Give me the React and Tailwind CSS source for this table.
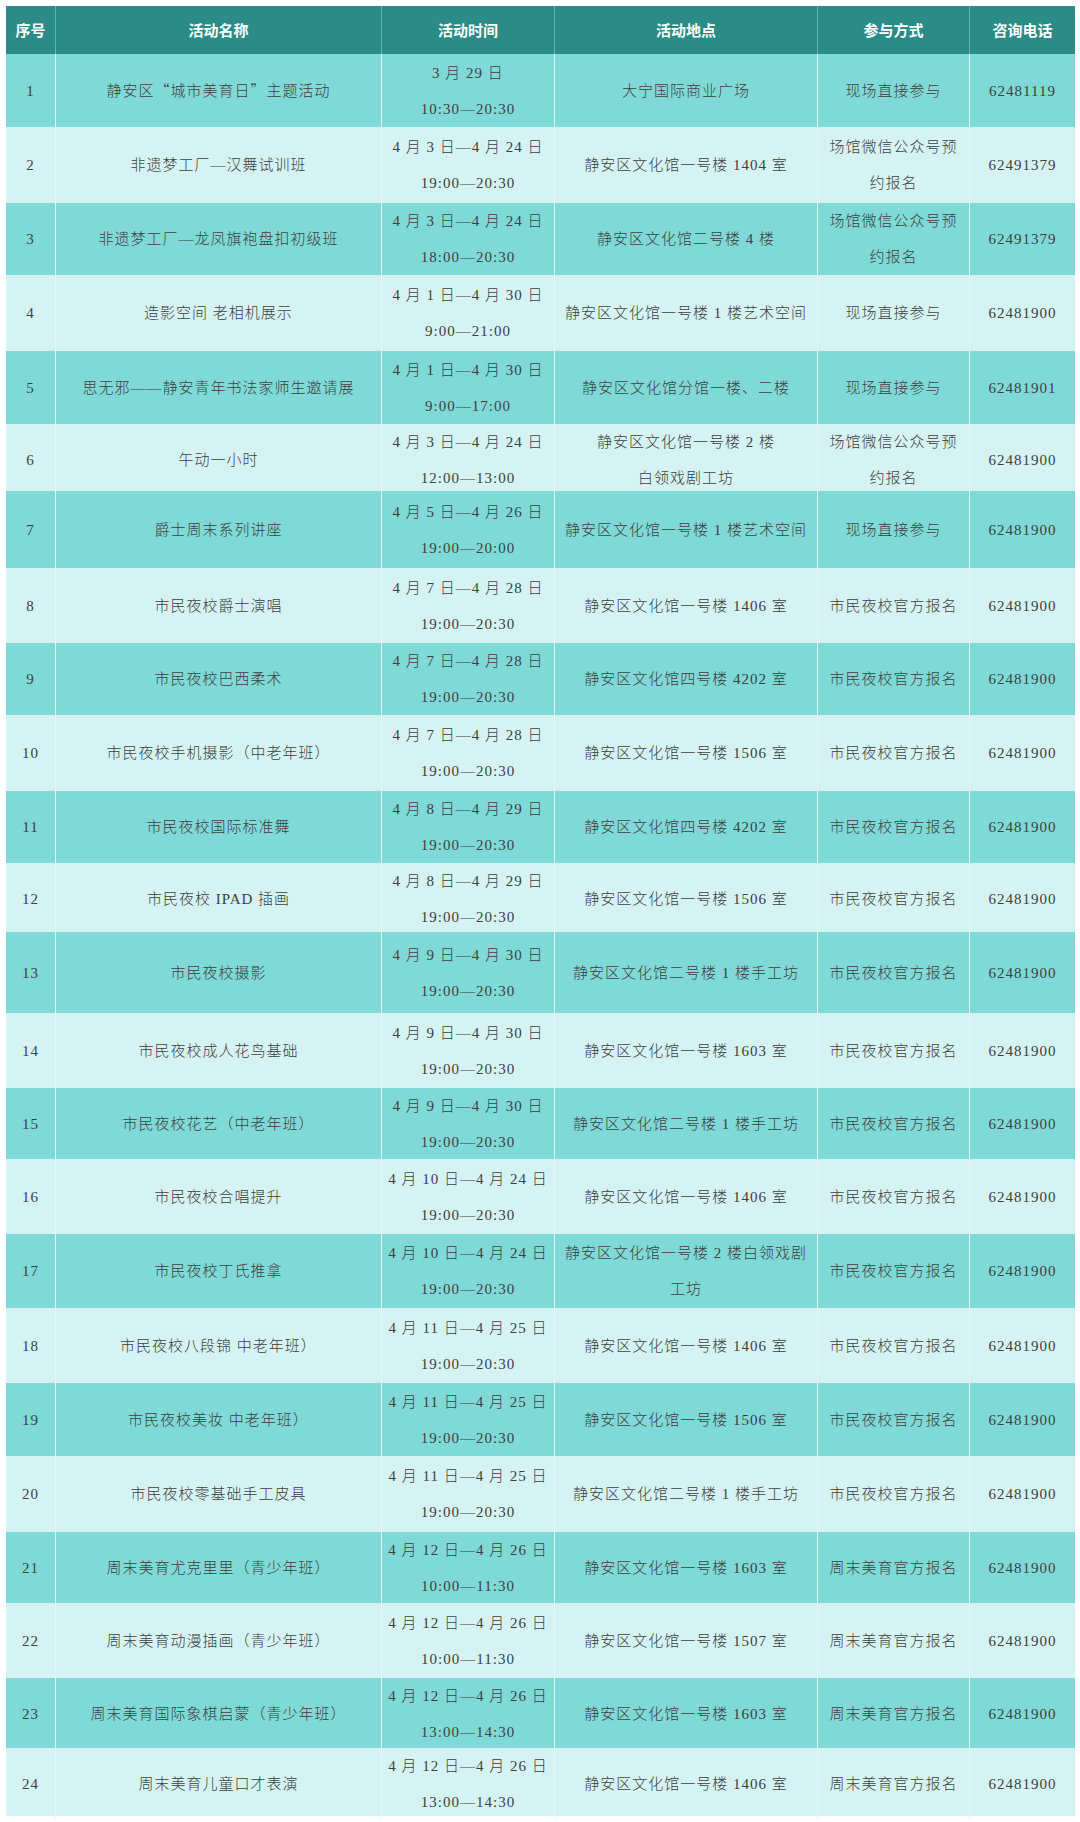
const cjk = "font-['Noto_Sans_CJK_SC',sans-serif]";

const rows = [
  { h: "h-[73px]", no: "1", name: [<>静安区<span className={cjk}>“</span>城市美育日<span className={cjk}>”</span>主题活动</>], time: ["3 月 29 日", "10:30—20:30"], place: ["大宁国际商业广场"], way: ["现场直接参与"], tel: "62481119" },
  { h: "h-[76px]", no: "2", name: ["非遗梦工厂—汉舞试训班"], time: ["4 月 3 日—4 月 24 日", "19:00—20:30"], place: ["静安区文化馆一号楼 1404 室"], way: ["场馆微信公众号预", "约报名"], tel: "62491379" },
  { h: "h-[72px]", no: "3", name: ["非遗梦工厂—龙凤旗袍盘扣初级班"], time: ["4 月 3 日—4 月 24 日", "18:00—20:30"], place: ["静安区文化馆二号楼 4 楼"], way: ["场馆微信公众号预", "约报名"], tel: "62491379" },
  { h: "h-[76px]", no: "4", name: ["造影空间 老相机展示"], time: ["4 月 1 日—4 月 30 日", "9:00—21:00"], place: ["静安区文化馆一号楼 1 楼艺术空间"], way: ["现场直接参与"], tel: "62481900" },
  { h: "h-[73px]", no: "5", name: ["思无邪——静安青年书法家师生邀请展"], time: ["4 月 1 日—4 月 30 日", "9:00—17:00"], place: ["静安区文化馆分馆一楼、二楼"], way: ["现场直接参与"], tel: "62481901" },
  { h: "h-[67px]", no: "6", name: ["午动一小时"], time: ["4 月 3 日—4 月 24 日", "12:00—13:00"], place: ["静安区文化馆一号楼 2 楼", "白领戏剧工坊"], way: ["场馆微信公众号预", "约报名"], tel: "62481900" },
  { h: "h-[77px]", no: "7", name: ["爵士周末系列讲座"], time: ["4 月 5 日—4 月 26 日", "19:00—20:00"], place: ["静安区文化馆一号楼 1 楼艺术空间"], way: ["现场直接参与"], tel: "62481900" },
  { h: "h-[75px]", no: "8", name: ["市民夜校爵士演唱"], time: ["4 月 7 日—4 月 28 日", "19:00—20:30"], place: ["静安区文化馆一号楼 1406 室"], way: ["市民夜校官方报名"], tel: "62481900" },
  { h: "h-[72px]", no: "9", name: ["市民夜校巴西柔术"], time: ["4 月 7 日—4 月 28 日", "19:00—20:30"], place: ["静安区文化馆四号楼 4202 室"], way: ["市民夜校官方报名"], tel: "62481900" },
  { h: "h-[76px]", no: "10", name: ["市民夜校手机摄影（中老年班）"], time: ["4 月 7 日—4 月 28 日", "19:00—20:30"], place: ["静安区文化馆一号楼 1506 室"], way: ["市民夜校官方报名"], tel: "62481900" },
  { h: "h-[72px]", no: "11", name: ["市民夜校国际标准舞"], time: ["4 月 8 日—4 月 29 日", "19:00—20:30"], place: ["静安区文化馆四号楼 4202 室"], way: ["市民夜校官方报名"], tel: "62481900" },
  { h: "h-[69px]", no: "12", name: ["市民夜校 IPAD 插画"], time: ["4 月 8 日—4 月 29 日", "19:00—20:30"], place: ["静安区文化馆一号楼 1506 室"], way: ["市民夜校官方报名"], tel: "62481900" },
  { h: "h-[81px]", no: "13", name: ["市民夜校摄影"], time: ["4 月 9 日—4 月 30 日", "19:00—20:30"], place: ["静安区文化馆二号楼 1 楼手工坊"], way: ["市民夜校官方报名"], tel: "62481900" },
  { h: "h-[75px]", no: "14", name: ["市民夜校成人花鸟基础"], time: ["4 月 9 日—4 月 30 日", "19:00—20:30"], place: ["静安区文化馆一号楼 1603 室"], way: ["市民夜校官方报名"], tel: "62481900" },
  { h: "h-[71px]", no: "15", name: ["市民夜校花艺（中老年班）"], time: ["4 月 9 日—4 月 30 日", "19:00—20:30"], place: ["静安区文化馆二号楼 1 楼手工坊"], way: ["市民夜校官方报名"], tel: "62481900" },
  { h: "h-[75px]", no: "16", name: ["市民夜校合唱提升"], time: ["4 月 10 日—4 月 24 日", "19:00—20:30"], place: ["静安区文化馆一号楼 1406 室"], way: ["市民夜校官方报名"], tel: "62481900" },
  { h: "h-[74px]", no: "17", name: ["市民夜校丁氏推拿"], time: ["4 月 10 日—4 月 24 日", "19:00—20:30"], place: ["静安区文化馆一号楼 2 楼白领戏剧", "工坊"], way: ["市民夜校官方报名"], tel: "62481900" },
  { h: "h-[75px]", no: "18", name: ["市民夜校八段锦 中老年班）"], time: ["4 月 11 日—4 月 25 日", "19:00—20:30"], place: ["静安区文化馆一号楼 1406 室"], way: ["市民夜校官方报名"], tel: "62481900" },
  { h: "h-[73px]", no: "19", name: ["市民夜校美妆 中老年班）"], time: ["4 月 11 日—4 月 25 日", "19:00—20:30"], place: ["静安区文化馆一号楼 1506 室"], way: ["市民夜校官方报名"], tel: "62481900" },
  { h: "h-[76px]", no: "20", name: ["市民夜校零基础手工皮具"], time: ["4 月 11 日—4 月 25 日", "19:00—20:30"], place: ["静安区文化馆二号楼 1 楼手工坊"], way: ["市民夜校官方报名"], tel: "62481900" },
  { h: "h-[71px]", no: "21", name: ["周末美育尤克里里（青少年班）"], time: ["4 月 12 日—4 月 26 日", "10:00—11:30"], place: ["静安区文化馆一号楼 1603 室"], way: ["周末美育官方报名"], tel: "62481900" },
  { h: "h-[75px]", no: "22", name: ["周末美育动漫插画（青少年班）"], time: ["4 月 12 日—4 月 26 日", "10:00—11:30"], place: ["静安区文化馆一号楼 1507 室"], way: ["周末美育官方报名"], tel: "62481900" },
  { h: "h-[70px]", no: "23", name: ["周末美育国际象棋启蒙（青少年班）"], time: ["4 月 12 日—4 月 26 日", "13:00—14:30"], place: ["静安区文化馆一号楼 1603 室"], way: ["周末美育官方报名"], tel: "62481900" },
  { h: "h-[68px]", no: "24", name: ["周末美育儿童口才表演"], time: ["4 月 12 日—4 月 26 日", "13:00—14:30"], place: ["静安区文化馆一号楼 1406 室"], way: ["周末美育官方报名"], tel: "62481900" },
];

const heads = ["序号", "活动名称", "活动时间", "活动地点", "参与方式", "咨询电话"];

function Cell({ lines, first }) {
  return (
    <div
      className={
        "flex flex-col items-center justify-center text-center px-1 leading-[36px] whitespace-nowrap " +
        (first ? "" : "border-l border-[#e2f8f7]")
      }
    >
      {lines.map((l, i) => (
        <span key={i}>{l}</span>
      ))}
    </div>
  );
}

export default function App() {
  return (
    <div className="bg-white w-[1080px] h-[1822px] pt-[6px] pl-[6px]">
      <div
        lang="zh-CN"
        className="w-[1069px] font-['Liberation_Serif','Noto_Sans_CJK_SC',serif] font-light text-[15px] tracking-[1px] text-[#404040]"
      >
        {/* header */}
        <div className="grid grid-cols-[49px_326px_173px_263px_152px_106px] h-[48px] bg-[#2a8b87] text-white font-bold font-['Noto_Sans_CJK_SC',sans-serif] text-[15px] tracking-normal">
          {heads.map((t, i) => (
            <div
              key={t}
              className={
                "flex items-center justify-center " +
                (i === 0 ? "" : "border-l border-[#5fb3af]")
              }
            >
              {t}
            </div>
          ))}
        </div>

        {/* rows */}
        {rows.map((r, idx) => (
          <div
            key={r.no}
            className={
              "grid grid-cols-[49px_326px_173px_263px_152px_106px] " +
              r.h +
              " " +
              (idx % 2 === 0 ? "bg-[#7fd9d6]" : "bg-[#d5f3f3]")
            }
          >
            <Cell lines={[r.no]} first />
            <Cell lines={r.name} />
            <Cell lines={r.time} />
            <Cell lines={r.place} />
            <Cell lines={r.way} />
            <Cell lines={[r.tel]} />
          </div>
        ))}
      </div>
    </div>
  );
}
